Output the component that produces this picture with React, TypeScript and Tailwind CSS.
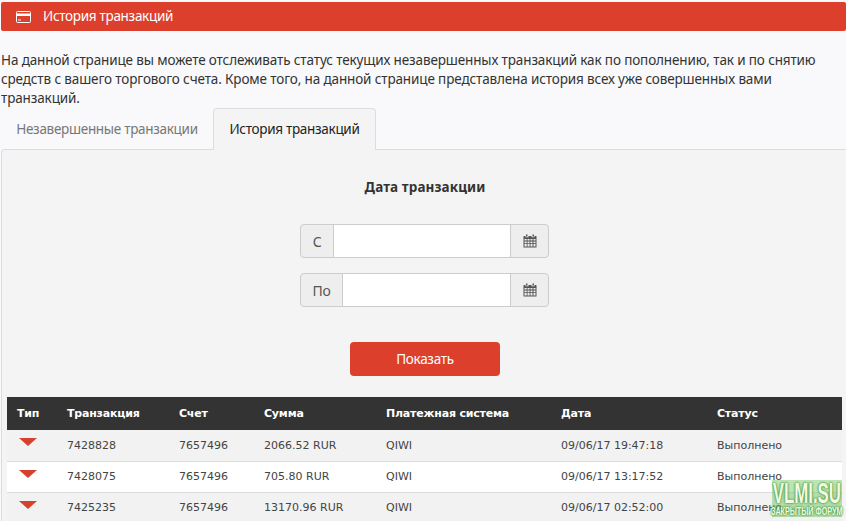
import React from "react";

const rows = [
  ["7428828", "7657496", "2066.52 RUR", "QIWI", "09/06/17 19:47:18", "Выполнено"],
  ["7428075", "7657496", "705.80 RUR", "QIWI", "09/06/17 13:17:52", "Выполнено"],
  ["7425235", "7657496", "13170.96 RUR", "QIWI", "09/06/17 02:52:00", "Выполнено"],
];

const Cal = () => (
  <svg width="14" height="14" viewBox="0 0 14 14" fill="#555">
    <path d="M3 0.5h1.5v2H3zM9.5 0.5H11v2H9.5z" />
    <path fillRule="evenodd" d="M1 2h1.5v1.2h3V2h3v1.2h3V2H13a.5.5 0 0 1 .5.5V13a.5.5 0 0 1-.5.5H1a.5.5 0 0 1-.5-.5V2.5A.5.5 0 0 1 1 2zM1.5 5v1.6h2.2V5zm3 0v1.6h2.1V5zm3 0v1.6h2V5zm3 0v1.6h2V5zm-9 2.4V9h2.2V7.4zm3 0V9h2.1V7.4zm3 0V9h2V7.4zm3 0V9h2V7.4zm-9 2.4v2.7h2.2V9.8zm3 0v2.7h2.1V9.8zm3 0v2.7h2V9.8zm3 0v2.7h2V9.8z" />
  </svg>
);

function DateGroup({ label, labelWidth }: { label: string; labelWidth: string }) {
  return (
    <div className="flex h-[34px] w-[249px] rounded-[4px] border border-[#ccc] bg-[#eee] text-[14px] text-[#555]">
      <span className={`flex items-center justify-center ${labelWidth}`}>{label}</span>
      <div className="flex-1 bg-white border-l border-r border-[#ccc]" />
      <span className="flex w-[37px] items-center justify-center"><Cal /></span>
    </div>
  );
}

export default function App() {
  return (
    <div className="relative h-[521px] w-[846px] overflow-hidden bg-[#f9f9fb] pt-[2px] text-[#333] font-['Noto_Sans',sans-serif] text-[13.5px] tracking-[-0.3px]">
      <div className="ml-[1px] flex h-[29px] items-center gap-[12px] rounded-[2px] bg-[#dc3f2c] pl-[15px] text-white">
        <svg width="15" height="12" viewBox="0 0 15 12" fill="none">
          <rect x="0.5" y="0.5" width="14" height="11" rx="1" fill="#dc3f2c" stroke="#fff" />
          <rect x="1" y="2.5" width="13" height="2.5" fill="#fff" />
          <rect x="2" y="8.5" width="3" height="1" fill="#fff" />
        </svg>
        <span>История транзакций</span>
      </div>
      <p className="mt-[20px] w-[840px] pl-[1px] leading-[19px] tracking-[-0.13px] text-[#333]">
        На данной странице вы можете отслеживать статус текущих незавершенных транзакций как по пополнению, так и по снятию средств с вашего торгового счета. Кроме того, на данной странице представлена история всех уже совершенных вами транзакций.
      </p>
      <div className="relative z-10 flex h-[42px] pl-[1px]">
        <div className="flex w-[212px] items-center justify-center text-[#777]">Незавершенные транзакции</div>
        <div className="flex w-[163px] items-center justify-center rounded-t-[4px] border border-b-0 border-[#ddd] bg-[#f4f4f4] text-[#222]">История транзакций</div>
      </div>
      <div className="ml-[1px] mt-[-1px] h-[400px] rounded-tl-[4px] border-l border-t border-[#ddd] bg-[#f4f4f4] pl-[5px]">
        <h3 className="mb-0 pt-[27px] pr-[3px] text-center font-bold leading-[20px] text-[#333] tracking-[0.1px]">Дата транзакции</h3>
        <div className="mt-[27px] ml-[293px] flex flex-col gap-[15px]">
          <DateGroup label="С" labelWidth="w-[32px]" />
          <DateGroup label="По" labelWidth="w-[41px]" />
        </div>
        <button className="mt-[35px] ml-[343px] block h-[34px] w-[150px] rounded-[4px] bg-[#dc3f2c] text-white">Показать</button>
        <table className="mt-[21px] w-[835px] table-fixed border-collapse font-['DejaVu_Sans',sans-serif] text-[11px] tracking-normal text-[#444]">
          <colgroup>
            <col className="w-[60px]" />
            <col className="w-[112px]" />
            <col className="w-[85px]" />
            <col className="w-[122px]" />
            <col className="w-[175px]" />
            <col className="w-[156px]" />
            <col />
          </colgroup>
          <thead>
            <tr className="h-[33px] bg-[#333] text-left text-white">
              {["Тип", "Транзакция", "Счет", "Сумма", "Платежная система", "Дата", "Статус"].map((h, i) => (
                <th key={h} className={i === 0 ? "pl-[10px] pt-[2px] font-bold tracking-[-0.2px]" : "pt-[2px] font-bold tracking-[-0.2px]"}>{h}</th>
              ))}
            </tr>
          </thead>
          <tbody>
            {rows.map((r, i) => (
              <tr key={r[0]} className={`h-[31px] border-b border-[#ddd] ${i === 1 ? "bg-white" : "bg-[#f2f2f2]"}`}>
                <td className="pb-[6px] pl-[13px]">
                  <svg width="18" height="8" viewBox="0 0 18 8" className="block -ml-px"><path d="M0 0h18L9 8z" fill="#d6412f" /></svg>
                </td>
                {r.map((c) => <td key={c} className="pt-[2px]">{c}</td>)}
              </tr>
            ))}
          </tbody>
        </table>
      </div>
      <div className="absolute left-[772px] top-[480px] flex w-[70px] flex-col items-center bg-[#6cc458]/45 font-['Liberation_Sans',sans-serif] font-bold tracking-normal text-[#f4fbe0] [text-shadow:0_0_2px_#2f8f2f,0_0_3px_#2f8f2f]">
        <span className="text-[30px] leading-[26px] [transform:scaleX(0.56)] whitespace-nowrap">VLMI.SU</span>
        <span className="text-[10px] leading-[11px] whitespace-nowrap [transform:scaleX(0.72)]">ЗАКРЫТЫЙ ФОРУМ</span>
      </div>
    </div>
  );
}
